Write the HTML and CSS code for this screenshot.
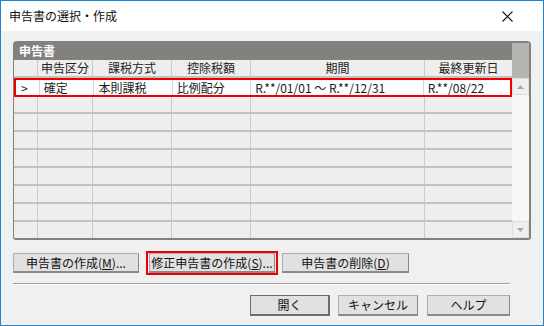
FILE: index.html
```html
<!DOCTYPE html>
<html lang="ja">
<head>
<meta charset="utf-8">
<title>申告書の選択・作成</title>
<link rel="stylesheet" href="styles.css">
</head>
<body>
<div class="window">
  <div class="titlebar">
    <span class="title">申告書の選択・作成</span>
    <svg class="close" width="11" height="11" viewBox="0 0 11 11"><path d="M0.5 0.5 L10.5 10.5 M10.5 0.5 L0.5 10.5" stroke="#111" stroke-width="1.1" fill="none"/></svg>
  </div>
  <div class="content">
    <div class="panel">
      <div class="grid">
        <div class="band">申告書</div>
        <div class="row head">
          <div class="c c1"></div>
          <div class="c c2">申告区分</div>
          <div class="c c3">課税方式</div>
          <div class="c c4">控除税額</div>
          <div class="c c5">期間</div>
          <div class="c c6">最終更新日</div>
        </div>
        <div class="row sel">
          <div class="c c1">&gt;</div>
          <div class="c c2">確定</div>
          <div class="c c3">本則課税</div>
          <div class="c c4">比例配分</div>
          <div class="c c5">R.**/01/01 ～ R.**/12/31</div>
          <div class="c c6">R.**/08/22</div>
        </div>
        <div class="row"><div class="c c1"></div><div class="c c2"></div><div class="c c3"></div><div class="c c4"></div><div class="c c5"></div><div class="c c6"></div></div>
        <div class="row"><div class="c c1"></div><div class="c c2"></div><div class="c c3"></div><div class="c c4"></div><div class="c c5"></div><div class="c c6"></div></div>
        <div class="row"><div class="c c1"></div><div class="c c2"></div><div class="c c3"></div><div class="c c4"></div><div class="c c5"></div><div class="c c6"></div></div>
        <div class="row"><div class="c c1"></div><div class="c c2"></div><div class="c c3"></div><div class="c c4"></div><div class="c c5"></div><div class="c c6"></div></div>
        <div class="row"><div class="c c1"></div><div class="c c2"></div><div class="c c3"></div><div class="c c4"></div><div class="c c5"></div><div class="c c6"></div></div>
        <div class="row"><div class="c c1"></div><div class="c c2"></div><div class="c c3"></div><div class="c c4"></div><div class="c c5"></div><div class="c c6"></div></div>
        <div class="row"><div class="c c1"></div><div class="c c2"></div><div class="c c3"></div><div class="c c4"></div><div class="c c5"></div><div class="c c6"></div></div>
        <div class="row last"><div class="c c1"></div><div class="c c2"></div><div class="c c3"></div><div class="c c4"></div><div class="c c5"></div><div class="c c6"></div></div>
      </div>
      <div class="vscroll">
        <div class="vs-top"></div>
        <div class="vs-track">
          <div class="vs-btn"><svg width="7" height="4" viewBox="0 0 7 4"><path d="M0 4 L3.5 0 L7 4 Z" fill="#a8a8a8"/></svg></div>
          <div class="vs-btn"><svg width="7" height="4" viewBox="0 0 7 4"><path d="M0 0 L3.5 4 L7 0 Z" fill="#a8a8a8"/></svg></div>
        </div>
      </div>
    </div>
    <div class="actions">
      <button class="btn b1">申告書の作成(<u>M</u>)...</button>
      <div class="hl"><button class="btn b2">修正申告書の作成(<u>S</u>)...</button></div>
      <button class="btn b3">申告書の削除(<u>D</u>)</button>
    </div>
    <div class="sep"></div>
    <div class="footer">
      <button class="btn fb default">開く</button>
      <button class="btn fb">キャンセル</button>
      <button class="btn fb help">ヘルプ</button>
    </div>
  </div>
</div>
</body>
</html>
```
FILE: styles.css
```css
* { box-sizing: border-box; }
html, body { margin: 0; padding: 0; }
body {
  width: 544px;
  height: 326px;
  overflow: hidden;
  font-family: "Noto Sans CJK JP", "Noto Sans", sans-serif;
  font-size: 12px;
  color: #1a1a1a;
  background: #f0f0f0;
}
.window {
  width: 544px;
  height: 326px;
  border: 1px solid #1a85d6;
  background: #f0f0f0;
  display: flex;
  flex-direction: column;
}
.titlebar {
  height: 30px;
  background: #fff;
  display: flex;
  align-items: center;
  justify-content: space-between;
  padding: 0 30px 0 8px;
  flex: none;
}
.title { font-size: 12px; line-height: 14px; color: #111; }
.close { display: block; }
.content {
  padding: 10px 0 0 12px;
  display: flex;
  flex-direction: column;
}
.panel {
  width: 518px;
  height: 199px;
  background: #83817d;
  border-radius: 4px 4px 3px 3px;
  padding: 0 2px 2px 1px;
  display: flex;
}
.grid {
  width: 498px;
  display: flex;
  flex-direction: column;
}
.band {
  height: 19px;
  color: #fff;
  font-weight: bold;
  padding-left: 5px;
  line-height: 19px;
  font-size: 12px;
}
.row {
  height: 18px;
  display: flex;
  background: #eeeeee;
  border-bottom: 2px solid #c3c1c1;
}
.row.last { height: 16px; border-bottom: none; }
.row.head { color: #222; }
.row.head .c { justify-content: center; padding-left: 0; }
.c {
  display: flex;
  align-items: center;
  padding-left: 4px;
  border-left: 1px solid #c9c9c9;
  line-height: 14px;
  white-space: nowrap;
}
.c1 { width: 23px; border-left: none; padding-left: 6px; }
.c2 { width: 55px; }
.c3 { width: 79px; }
.c4 { width: 79px; }
.c5 { width: 174px; }
.c6 { width: 88px; }
.row.sel {
  background: #fff;
  height: 19px;
  border: 2px solid #ee0000;
  border-top-width: 2px;
}
.row.sel .c { border-left: 1px solid #d8d8d8; }
.row.sel .c1 { border-left: none; padding-left: 5px; }
.row.sel + .row { height: 17px; }
.vscroll {
  width: 17px;
  display: flex;
  flex-direction: column;
}
.vs-top {
  height: 35px;
  margin-top: 2px;
  background: #b6b4b0;
}
.vs-track {
  flex: 1;
  background: #f7f7f7;
  display: flex;
  flex-direction: column;
  justify-content: space-between;
}
.vs-btn {
  height: 17px;
  background: #efefef;
  border: 1px solid #dedede;
  display: flex;
  align-items: center;
  justify-content: center;
}
.vs-btn svg { display: block; }
.btn {
  font-family: "Noto Sans CJK JP", "Noto Sans", sans-serif;
  font-size: 12px;
  color: #111;
  background: #e1e1e1;
  border: 1px solid #adadad;
  border-right-color: #8a8a8a;
  border-bottom: 2px solid #8a8a8a;
  padding: 0;
  margin: 0;
  display: flex;
  align-items: center;
  justify-content: center;
  line-height: 14px;
  white-space: nowrap;
}
.btn u { text-underline-offset: 1px; }
.actions {
  margin-top: 11px;
  height: 24px;
  display: flex;
  align-items: center;
}
.b1 { width: 126px; height: 20px; }
.hl {
  margin-left: 7px;
  width: 132px;
  height: 24px;
  border: 2px solid #ee0000;
  padding: 0 1px;
  display: flex;
  align-items: center;
}
.b2 { width: 128px; height: 20px; }
.b3 { margin-left: 4px; width: 127px; height: 20px; }
.sep {
  margin-top: 8px;
  width: 497px;
  height: 2px;
  border-top: 1px solid #a0a0a0;
  border-bottom: 1px solid #ffffff;
}
.footer {
  margin-top: 10px;
  width: 497px;
  display: flex;
  justify-content: flex-end;
  gap: 8px;
}
.fb { width: 80px; height: 21px; }
.fb.help { width: 83px; margin-left: 1px; }
.fb.default {
  border: 1px solid #6e6e6e;
  border-bottom: 2px solid #6e6e6e;
  border-right: 2px solid #6e6e6e;
}
```
